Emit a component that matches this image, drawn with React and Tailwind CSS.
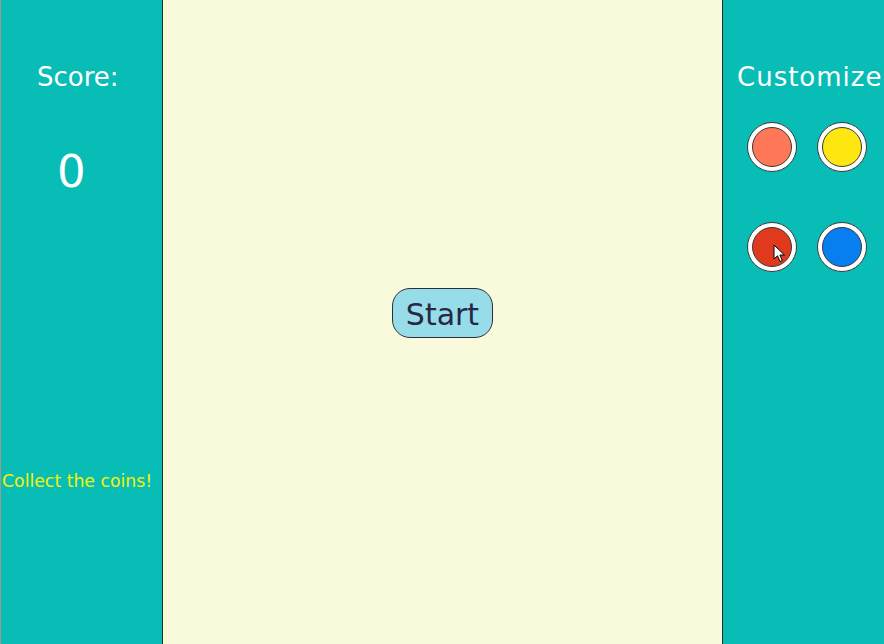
import React from "react"

const colors = ["bg-[#fe7757]", "bg-[#fee711]", "bg-[#e0391e]", "bg-[#087ff0]"]

function Swatch({ color, hovered }) {
  return (
    <button className="relative w-[50px] h-[50px] rounded-full bg-white border border-[#3a3a3a] flex items-center justify-center">
      <span className={`block w-[40px] h-[40px] rounded-full border border-[#3a3a3a] ${color}`} />
      {hovered && (
        <svg className="absolute left-[25px] top-[21px]" width="13" height="19" viewBox="0 0 13 19">
          <path d="M1 1 L1 15 L4.5 11.8 L7 17.5 L9.3 16.5 L6.9 11 L11.5 11 Z" fill="#fff" stroke="#000" strokeWidth="1" strokeLinejoin="round" />
        </svg>
      )}
    </button>
  )
}

export default function App() {
  return (
    <div
      className="flex h-[644px] w-[884px] overflow-hidden"
      style={{ fontFamily: '"DejaVu Sans", sans-serif' }}
    >
      <div className="w-[163px] shrink-0 bg-[#07bdb6] border-l border-l-[#9a9a9a] border-r border-r-[#2e2a26] flex flex-col">
        <div className="mt-[59px] pl-[36px] text-white text-[26px] leading-[36px] whitespace-nowrap">
          Score:
        </div>
        <div className="mt-[52px] text-white text-[45px] leading-[50px] pl-[56px]">0</div>
        <div className="mt-[274px] text-[#f4f205] text-[17.3px] leading-[20px] pl-[1px] whitespace-nowrap">
          Collect the coins!
        </div>
      </div>
      <div className="flex-1 bg-[#f8fadb] flex justify-center pt-[288px]">
        <button className="h-[50px] w-[101px] rounded-[18px] bg-[#96dde9] border border-[#2e2e3a] text-[#282842] text-[30px] leading-none pt-[3px]">
          Start
        </button>
      </div>
      <div className="w-[162px] shrink-0 bg-[#07bdb6] border-l border-[#2e2a26] flex flex-col">
        <div className="mt-[59px] pl-[14px] text-white text-[26px] leading-[36px] tracking-[1px] whitespace-nowrap">
          Customize
        </div>
        <div className="mt-[27px] pl-[24px] grid grid-cols-[50px_50px] gap-x-[20px] gap-y-[50px]">
          {colors.map((c, i) => (
            <Swatch key={c} color={c} hovered={i === 2} />
          ))}
        </div>
      </div>
    </div>
  )
}
